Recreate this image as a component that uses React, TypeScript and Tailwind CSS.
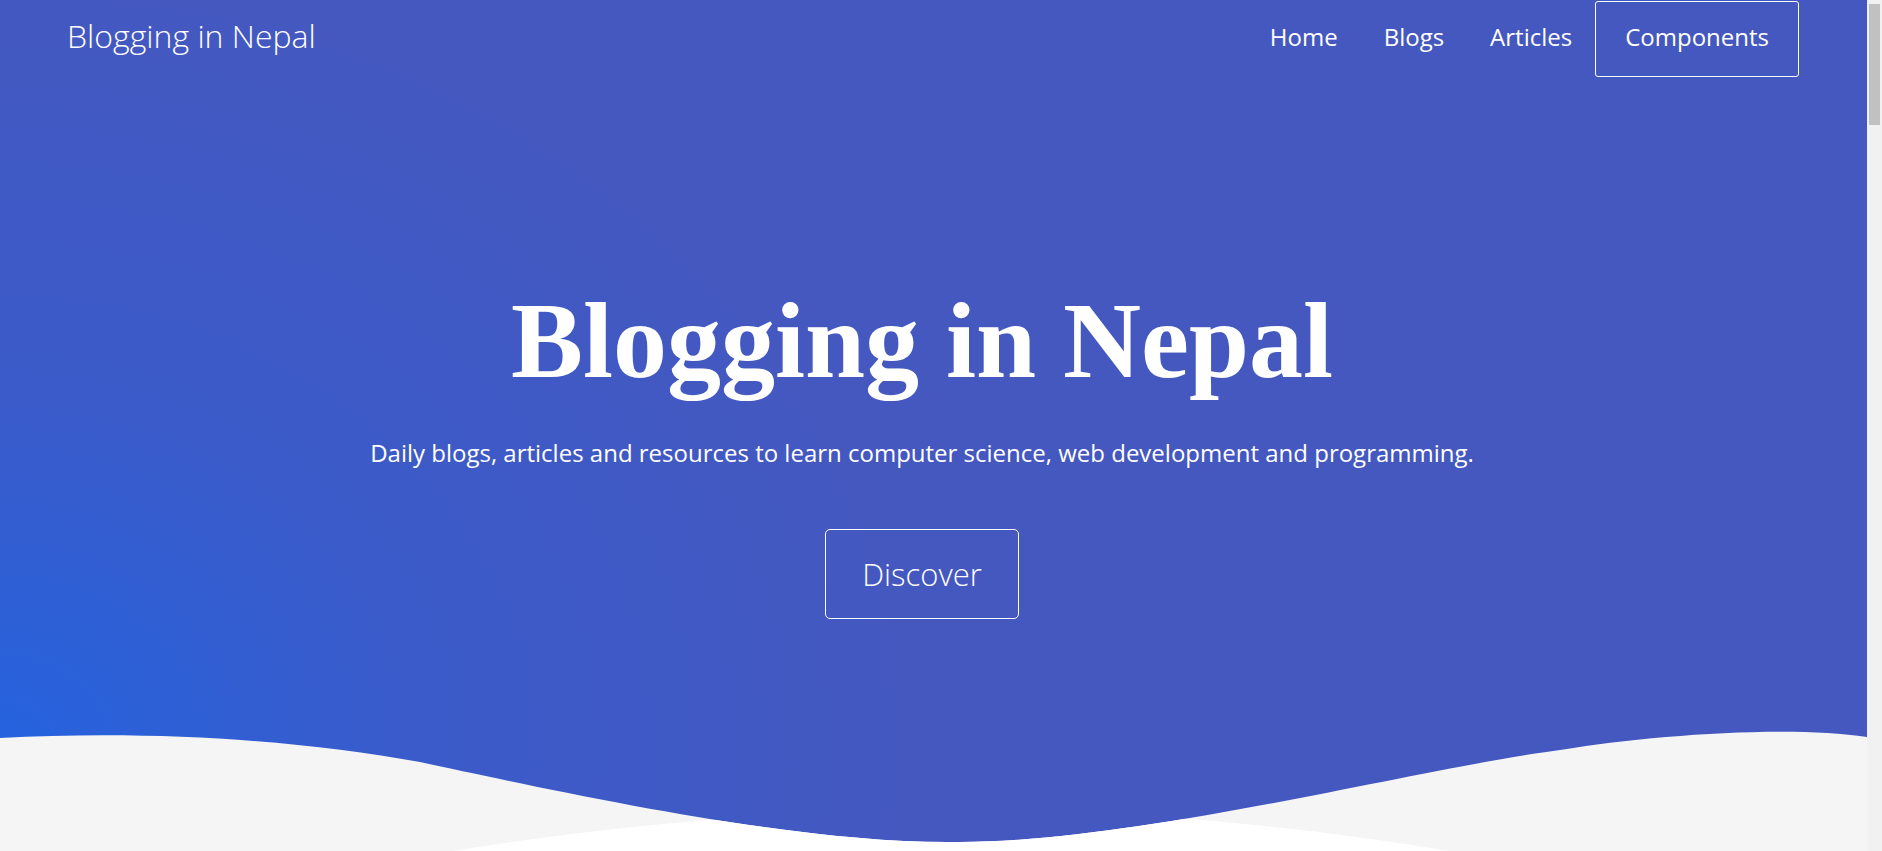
import React from 'react';

const links = ['Home', 'Blogs', 'Articles'];

const wave =
    'M0 738 C150 730 300 740 420 762 C560 792 800 845 960 842 C1140 842 1420 768 1560 750 C1650 735 1790 725 1867 737 L1867 851 L0 851 Z';

const App = () => {
    return (
        <div className="flex min-h-screen bg-white font-['Open_Sans','Lato',sans-serif]">
            <main className="min-w-0 flex-1">
                <section className="relative h-[851px] overflow-hidden text-white bg-[radial-gradient(ellipse_900px_760px_at_0%_88%,#2563df_0%,#3a5bca_45%,#4458c0_100%)]">
                    <nav className="flex items-start justify-between pl-[67px] pr-[68px] pt-px">
                        <a href="#" className="flex h-[76px] items-center pb-[6px] text-[32px] font-light">
                            Blogging in Nepal
                        </a>
                        <ul className="flex items-center text-[24px]">
                            {links.map((link) => (
                                <li key={link}>
                                    <a href="#" className="flex h-[76px] items-center px-[23px] pb-[4px]">
                                        {link}
                                    </a>
                                </li>
                            ))}
                            <li>
                                <a
                                    href="#"
                                    className="flex h-[76px] items-center rounded-[3px] border border-white px-[29px] pb-[4px]"
                                >
                                    Components
                                </a>
                            </li>
                        </ul>
                    </nav>

                    <div className="flex flex-col items-center pr-[23px] pt-[210px] text-center">
                        <h1 className="font-['Liberation_Serif',serif] text-[108px] font-bold leading-none">
                            Blogging in Nepal
                        </h1>
                        <p className="mt-[44px] text-[24px] leading-[1.2]">
                            Daily blogs, articles and resources to learn computer science, web development
                            and programming.
                        </p>
                        <a
                            href="#"
                            className="mt-[61px] rounded-[5px] border border-white px-[36px] py-[26px] text-[31px] font-light leading-[36px]"
                        >
                            Discover
                        </a>
                    </div>

                    <svg
                        className="absolute inset-x-0 bottom-0 h-[131px] w-full"
                        viewBox="0 720 1867 131"
                        preserveAspectRatio="none"
                    >
                        <defs>
                            <clipPath id="below-wave">
                                <path d={wave} />
                            </clipPath>
                        </defs>
                        <path d={wave} fill="#f5f5f5" />
                        <path d="M400 860 Q960 760 1500 860 Z" fill="#ffffff" clipPath="url(#below-wave)" />
                    </svg>
                </section>

                <section className="h-[5140px] bg-white" />
            </main>

            {/* page scrollbar as seen in the screenshot */}
            <aside className="w-[15px] shrink-0 bg-[#f1f1f1]">
                <div className="sticky top-0 h-screen px-[2px] pt-[4px]">
                    <div className="h-[121px] bg-[#c1c1c1]" />
                </div>
            </aside>
        </div>
    );
};

export default App;
